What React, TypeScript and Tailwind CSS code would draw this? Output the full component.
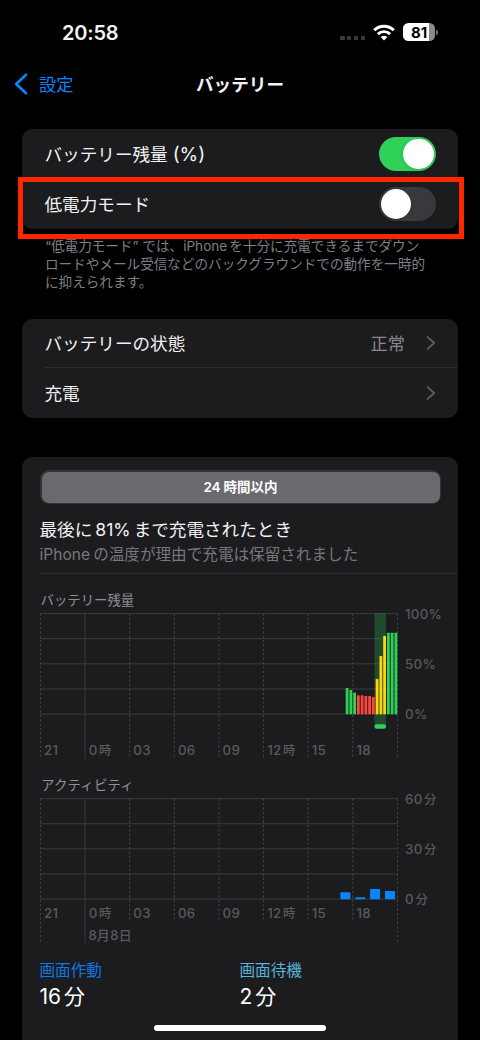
import type { ReactNode } from 'react';
import clsx from 'clsx';

const levels = [
  { top: 688, color: '#30d158' },
  { top: 690, color: '#30d158' },
  { top: 692.5, color: '#30d158' },
  { top: 695.3, color: '#ff453a' },
  { top: 695.3, color: '#ff453a' },
  { top: 696, color: '#ff453a' },
  { top: 696, color: '#ff453a' },
  { top: 697, color: '#ff453a' },
  { top: 679, color: '#ffd60a' },
  { top: 656, color: '#ffd60a' },
  { top: 635.7, color: '#ffd60a' },
  { top: 632.7, color: '#30d158' },
  { top: 632.7, color: '#30d158' },
  { top: 632.7, color: '#30d158' },
];

const activity = [
  { x: 340.4, top: 892.2 },
  { x: 355.3, top: 897.3 },
  { x: 370.1, top: 889 },
  { x: 385, top: 891 },
];

const hours = ['21', '0時', '03', '06', '09', '12時', '15', '18'];

const columnX = (i: number) => 40.4 + i * 44.63;

// Latin digits inside Japanese text get a bit of air around them
function Num({ children, className }: { children: ReactNode; className?: string }) {
  return <span className={clsx('inline-block', className)}>{children}</span>;
}

function Chevron() {
  return (
    <svg width="10" height="16" viewBox="0 0 10 16" fill="none">
      <path d="M1.6 2.1 8.2 8l-6.6 5.9" stroke="#5b5b60" strokeWidth="1.9" strokeLinecap="round" strokeLinejoin="round" />
    </svg>
  );
}

function Toggle({ on }: { on: boolean }) {
  return (
    <div
      role="switch"
      aria-checked={on}
      className={clsx(
        'flex h-[34.5px] w-[57px] items-center rounded-full px-[2px]',
        on ? 'justify-end bg-[#30d158]' : 'bg-[#39393d]',
      )}
    >
      <div className="size-[30.6px] rounded-full bg-white shadow-[0_1px_4px_rgba(0,0,0,0.15)]" />
    </div>
  );
}

function AxisLabel({ x, y, text }: { x: number; y: number; text: string }) {
  const [, num, unit] = text.match(/^(\d+)(.*)$/)!;
  const gap = unit && unit !== '%';
  return (
    <text x={x} y={y} fontSize="13.3" fontWeight="500" letterSpacing="0.3" fill="#59595d">
      {num}
      {unit && <tspan dx={gap ? 1.5 : 0} fontSize={gap ? 12.3 : 13.3}>{unit}</tspan>}
    </text>
  );
}

function Grid({ top, solidEnd, edgeEnd, innerEnd }: { top: number; solidEnd: number; edgeEnd: number; innerEnd: number }) {
  return (
    <g stroke="#3b3b3d">
      {[0, 1, 2, 3, 4].map((i) => (
        <line key={i} x1="40" x2="397.5" y1={top + i * 25.12} y2={top + i * 25.12} />
      ))}
      {[0, 1, 2, 3, 4, 5, 6, 7, 8].map((i) => (
        <line
          key={i}
          x1={columnX(i)}
          x2={columnX(i)}
          y1={top}
          y2={i === 1 ? solidEnd : i % 8 === 0 ? edgeEnd : innerEnd}
          stroke={i === 1 ? '#3b3b3d' : '#48484a'}
          strokeDasharray={i === 1 ? undefined : '2.2 2.2'}
        />
      ))}
    </g>
  );
}

function LevelChart() {
  return (
    <svg className="block" width="436" height="167" viewBox="22 599 436 167">
      <Grid top={613.6} solidEnd={759} edgeEnd={757} innerEnd={757} />
      <rect x="374.5" y="613.3" width="11.5" height="113" fill="#30d158" fillOpacity="0.26" />
      <rect x="374.5" y="724.2" width="11.5" height="4.5" rx="2" fill="#30d158" />
      {levels.map((bar, i) => (
        <rect key={i} x={345.7 + i * 3.75} y={bar.top} width="2.8" height={714.3 - bar.top} rx="0.6" fill={bar.color} />
      ))}
      {hours.map((h, i) => (
        <AxisLabel key={h} x={columnX(i) + 3.6} y={755} text={h} />
      ))}
      <AxisLabel x={405} y={618.7} text="100%" />
      <AxisLabel x={405} y={669} text="50%" />
      <AxisLabel x={405} y={719.3} text="0%" />
    </svg>
  );
}

function ActivityChart() {
  return (
    <svg className="block" width="436" height="165" viewBox="22 784 436 165">
      <Grid top={798.6} solidEnd={943.5} edgeEnd={942} innerEnd={919.5} />
      {activity.map((bar) => (
        <rect key={bar.x} x={bar.x} y={bar.top} width="10" height={899.2 - bar.top} rx="0.8" fill="#0a84ff" />
      ))}
      {hours.map((h, i) => (
        <AxisLabel key={h} x={columnX(i) + 3.6} y={917.8} text={h} />
      ))}
      <text x="88.4" y="940.4" fontSize="13" fontWeight="500" letterSpacing="0.3" fill="#59595d">
        8月8日
      </text>
      <AxisLabel x={405} y={803.7} text="60分" />
      <AxisLabel x={405} y={854} text="30分" />
      <AxisLabel x={405} y={904.3} text="0分" />
    </svg>
  );
}

function StatusBar() {
  return (
    <div className="flex h-[64px] items-center justify-between pr-[42px] pl-[62px]">
      <span className="pt-[1px] text-[20px] leading-[24px] font-semibold tracking-[-0.2px]">20:58</span>
      <div className="flex items-center">
        <div className="mt-[12px] mr-[8px] flex gap-[2.6px]">
          {[0, 1, 2, 3].map((i) => (
            <span key={i} className="size-[4.2px] rounded-[1px] bg-[#3a3a3a]" />
          ))}
        </div>
        <svg className="mr-[8px]" width="22" height="17" viewBox="0 0 22 17" fill="none" stroke="#fff" strokeWidth="2.9">
          <path d="M1.2 6.3a14 14 0 0 1 19.6 0" />
          <path d="M4.9 10.1a8.8 8.8 0 0 1 12.2 0" />
          <path d="M11 16.4 7.7 13a4.7 4.7 0 0 1 6.6 0Z" fill="#fff" stroke="none" />
        </svg>
        <div className="flex h-[17.5px] w-[32px] items-center justify-center rounded-[5.5px] bg-[linear-gradient(to_right,#fff_81%,#8a8a8a_81%)] text-[15px] leading-none font-bold text-black">
          81
        </div>
        <div className="ml-[1px] h-[5px] w-[2px] rounded-r-full bg-[#777]" />
      </div>
    </div>
  );
}

export default function App() {
  return (
    <div className="relative h-[1040px] w-[480px] overflow-hidden bg-black font-['Inter','Noto_Sans_CJK_JP',sans-serif] text-[17.6px] text-[#f2f2f4]" lang="ja">
      <StatusBar />

      <header className="grid h-[41px] grid-cols-3 items-center">
        <div className="flex items-center gap-[11px] pl-[14px] text-[#0a84ff]">
          <svg width="14" height="22" viewBox="0 0 14 22" fill="none">
            <path d="M12 1.7 2.2 11 12 20.3" stroke="currentColor" strokeWidth="2.6" strokeLinecap="round" strokeLinejoin="round" />
          </svg>
          <span className="text-[17.2px]">設定</span>
        </div>
        <h1 className="pt-[2px] text-center font-semibold">バッテリー</h1>
      </header>

      <section className="mx-[22px] mt-[24px] h-[100px] rounded-[11px] bg-[#1c1c1e]">
        <div className="flex h-[50px] items-center justify-between px-[22.5px]">
          <span className="pt-[2px]">
            バッテリー残量<Num className="ml-[5px] text-[19px] leading-none">(%)</Num>
          </span>
          <Toggle on />
        </div>
        <div className="flex h-[50px] items-center justify-between px-[22.5px]">
          <span className="pt-[2px]">低電力モード</span>
          <Toggle on={false} />
        </div>
      </section>

      <p className="mt-[8px] h-[54px] pl-[45px] text-[13.6px] leading-[18.2px] whitespace-nowrap text-[#7f7f85]">
        “低電力モード” では、<Num className="mr-[2px]">iPhone</Num>を十分に充電できるまでダウン
        <br />
        ロードやメール受信などのバックグラウンドでの動作を一時的
        <br />
        に抑えられます。
      </p>

      <section className="mx-[22px] mt-[28px] h-[99px] rounded-[11px] bg-[#1c1c1e] pl-[22.5px]">
        <div className="flex h-[49px] items-center border-b border-[#2c2c2e] pr-[22px]">
          <span className="grow pt-[2px]">バッテリーの状態</span>
          <span className="mr-[21px] pt-[2px] text-[17.2px] text-[#88888d]">正常</span>
          <Chevron />
        </div>
        <div className="flex h-[50px] items-center justify-between pr-[22px]">
          <span className="pt-[2px]">充電</span>
          <Chevron />
        </div>
      </section>

      <section className="mx-[22px] mt-[39px] h-[600px] rounded-t-[11px] bg-[#1c1c1e]">
        <div className="pt-[13px] pr-[17px] pl-[18px]">
          <div className="h-[34px] rounded-[9px] bg-[#343437] p-[1.5px]">
            <div className="flex h-full items-center justify-center rounded-[7px] bg-[#69696e] text-[13.5px] font-semibold text-white">
              <Num className="mr-[3px]">24</Num>時間以内
            </div>
          </div>
        </div>
        <div className="ml-[17.5px] h-[70px] border-b border-[#2c2c2e] pt-[13px]">
          <div className="h-[25px] leading-[25px]">
            最後に<Num className="mx-[3px]">81%</Num>まで充電されたとき
          </div>
          <div className="h-[24px] text-[15.6px] leading-[25px] text-[#77777c]">
            <Num className="mr-[3px]">iPhone</Num>の温度が理由で充電は保留されました
          </div>
        </div>

        <div className="h-[25px] pt-[16px] pl-[18.5px] text-[13.4px] leading-[20px] text-[#909095]">バッテリー残量</div>
        <LevelChart />
        <div className="h-[18px] pt-[9px] pl-[19px] text-[13.4px] leading-[20px] tracking-[0.2px] text-[#909095]">アクティビティ</div>
        <ActivityChart />

        <div className="grid grid-cols-[200px_1fr] pt-[11px] pl-[17.5px]">
          <div>
            <div className="text-[15.6px] leading-[22px] text-[#0f78e4]">画面作動</div>
            <div className="text-[21px] leading-[30px] text-white">
              <Num className="mr-[3px]">16</Num>分
            </div>
          </div>
          <div>
            <div className="text-[15.6px] leading-[22px] text-[#56b5dc]">画面待機</div>
            <div className="text-[21px] leading-[30px] text-white">
              <Num className="mr-[3px]">2</Num>分
            </div>
          </div>
        </div>
      </section>

      {/* Highlight around the low power mode row */}
      <div className="absolute top-[177px] left-[18px] h-[62px] w-[446px] border-[5px] border-[#ff2600]" />

      {/* Home indicator */}
      <div className="absolute top-[1025px] left-[154px] h-[6px] w-[172px] rounded-full bg-white" />
    </div>
  );
}
